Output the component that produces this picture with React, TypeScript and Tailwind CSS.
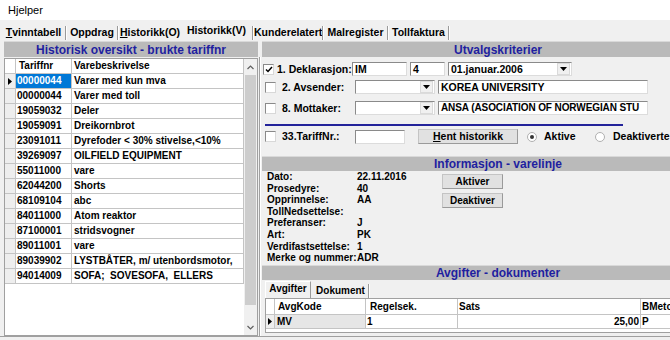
import React from "react";

const rows: [string, string][] = [
  ["00000044", "Varer med kun mva"],
  ["00000044", "Varer med toll"],
  ["19059032", "Deler"],
  ["19059091", "Dreikornbrot"],
  ["23091011", "Dyrefoder < 30% stivelse,<10%"],
  ["39269097", "OILFIELD EQUIPMENT"],
  ["55011000", "vare"],
  ["62044200", "Shorts"],
  ["68109104", "abc"],
  ["84011000", "Atom reaktor"],
  ["87100001", "stridsvogner"],
  ["89011001", "vare"],
  ["89039902", "LYSTBÅTER, m/ utenbordsmotor,"],
  ["94014009", "SOFA;  SOVESOFA,  ELLERS"],
];

function Arrow() {
  return (
    <svg width="4" height="7" viewBox="0 0 4 7">
      <path d="M0 0L4 3.5L0 7Z" fill="#000" />
    </svg>
  );
}

function Bar({ children, className = "" }: { children: React.ReactNode; className?: string }) {
  return (
    <div
      className={
        "shrink-0 bg-[#bababa] border-t border-[#d9d9d9] flex items-center justify-center text-[12px] font-bold text-[#1f1fa0] whitespace-nowrap " +
        className
      }
    >
      {children}
    </div>
  );
}

function Sep() {
  return <div className="w-[2px] h-[14px] shrink-0 border-l border-[#9a9a9a] border-r border-r-white" />;
}

function Tabs() {
  return (
    <div className="h-[20px] shrink-0 flex items-center pt-[6px] pl-[2px] text-[10.5px] font-bold whitespace-nowrap">
      <div className="w-[63px] text-center">
        <span className="underline underline-offset-[1px]">T</span>vinntabell
      </div>
      <Sep />
      <div className="w-[50px] text-center">Oppdrag</div>
      <Sep />
      <div className="w-[62px] text-center">
        <span className="underline underline-offset-[1px]">H</span>istorikk(O)
      </div>
      <div className="w-[71px] text-center mb-[4px]">Historikk(V)</div>
      <Sep />
      <div className="w-[68px] text-center">Kunderelatert</div>
      <Sep />
      <div className="w-[63px] text-center">Malregister</div>
      <Sep />
      <div className="w-[59px] text-center">Tollfaktura</div>
      <Sep />
    </div>
  );
}

function Chevron({ up }: { up?: boolean }) {
  return (
    <svg width="7" height="5" viewBox="0 0 7 5">
      <path d={up ? "M0.5 4L3.5 1L6.5 4" : "M0.5 1L3.5 4L6.5 1"} stroke="#606060" strokeWidth="1.2" fill="none" />
    </svg>
  );
}

function Left() {
  return (
    <div className="ml-[4px] w-[254px] shrink-0 flex flex-col">
      <Bar className="mt-[1px] h-[16px]">Historisk oversikt - brukte tariffnr</Bar>
      <div className="mt-[1px] h-[278px] border border-[#a0a0a0] bg-white flex">
        <div className="w-[239px] flex flex-col text-[10px] font-bold leading-none">
          <div className="flex h-[15px] border-b border-[#c4c4c4]">
            <div className="w-[11px] border-r border-[#c4c4c4]" />
            <div className="w-[56px] border-r border-[#c4c4c4] pl-[3px] flex items-center">Tariffnr</div>
            <div className="flex-1 border-r border-[#c4c4c4] pl-[2px] flex items-center">Varebeskrivelse</div>
          </div>
          {rows.map(([a, b], i) => (
            <div key={i} className="flex h-[15px] border-b border-[#c4c4c4]">
              <div className="w-[11px] bg-[#eeeeee] border-r border-[#c4c4c4] flex items-center justify-center">
                {i === 0 && <Arrow />}
              </div>
              <div
                className={
                  "w-[56px] border-r border-[#c4c4c4] pl-[1px] flex items-center " +
                  (i === 0 ? "bg-[#0078d7] text-white" : "")
                }
              >
                {a}
              </div>
              <div className="flex-1 border-r border-[#c4c4c4] pl-[2px] flex items-center whitespace-pre overflow-hidden">
                {b}
              </div>
            </div>
          ))}
        </div>
        <div className="w-[13px] flex flex-col bg-[#f0f0f0]">
          <div className="h-[16px] flex items-center justify-center">
            <Chevron up />
          </div>
          <div className="h-[230px] bg-[#cdcdcd] mx-[1px]" />
          <div className="flex-1" />
          <div className="h-[16px] flex items-center justify-center">
            <Chevron />
          </div>
        </div>
      </div>
    </div>
  );
}

function Check({ checked }: { checked?: boolean }) {
  return (
    <div className="w-[11px] h-[11px] shrink-0 bg-white border border-[#8a8a8a] border-r-[#d8d8d8] border-b-[#d8d8d8] flex items-center justify-center">
      {checked && (
        <svg width="8" height="7" viewBox="0 0 8 7">
          <path d="M1 3.5L3 5.5L7 1" stroke="#000" strokeWidth="1.5" fill="none" />
        </svg>
      )}
    </div>
  );
}

function Field({ children, className = "" }: { children?: React.ReactNode; className?: string }) {
  return (
    <div
      className={
        "shrink-0 bg-white border border-[#8a8a8a] border-r-[#dcdcdc] border-b-[#dcdcdc] flex items-center pl-[2px] overflow-hidden whitespace-nowrap " +
        className
      }
    >
      {children}
    </div>
  );
}

function Combo({ children, className = "" }: { children?: React.ReactNode; className?: string }) {
  return (
    <div
      className={
        "shrink-0 bg-white border border-[#8a8a8a] border-r-[#dcdcdc] border-b-[#dcdcdc] flex items-center overflow-hidden whitespace-nowrap " +
        className
      }
    >
      <div className="flex-1 pl-[2px]">{children}</div>
      <div className="w-[13px] h-[12px] mr-[1px] bg-[#f0f0f0] border border-[#dadada] flex items-center justify-center">
        <svg width="7" height="4" viewBox="0 0 7 4">
          <path d="M0 0H7L3.5 4Z" fill="#000" />
        </svg>
      </div>
    </div>
  );
}

function Btn({ children, className = "" }: { children: React.ReactNode; className?: string }) {
  return (
    <div
      className={
        "shrink-0 bg-[#e1e1e1] border border-[#c4c4c4] border-r-[#9a9a9a] border-b-[#9a9a9a] flex items-center justify-center whitespace-nowrap " +
        className
      }
    >
      {children}
    </div>
  );
}

function Radio({ checked }: { checked?: boolean }) {
  return (
    <div className="w-[10px] h-[10px] shrink-0 rounded-full bg-white border border-[#b0b0b0] flex items-center justify-center">
      {checked && <div className="w-[4px] h-[4px] rounded-full bg-[#333]" />}
    </div>
  );
}

function Right() {
  const labels = [
    ["Dato:", "22.11.2016"],
    ["Prosedyre:", "40"],
    ["Opprinnelse:", "AA"],
    ["TollNedsettelse:", ""],
    ["Preferanser:", "J"],
    ["Art:", "PK"],
    ["Verdifastsettelse:", "1"],
    ["Merke og nummer:", "ADR"],
  ];
  return (
    <div className="w-[472px] shrink-0 flex flex-col">
      <Bar className="mt-[1px] h-[16px]">Utvalgskriterier</Bar>
      <div className="h-[99px] shrink-0 flex flex-col text-[10.5px] font-bold leading-none">
        <div className="mt-[5px] h-[14px] flex items-center">
          <div className="w-[90px] flex items-center pl-[1px]">
            <Check checked />
            <span className="ml-[3px]">1. Deklarasjon:</span>
          </div>
          <Field className="w-[55px] h-full">IM</Field>
          <Field className="ml-[3px] w-[35px] h-full">4</Field>
          <Combo className="ml-[3px] w-[124px] h-full">01.januar.2006</Combo>
        </div>
        <div className="mt-[4px] h-[14px] flex items-center">
          <div className="w-[93px] flex items-center pl-[3px]">
            <Check />
            <span className="ml-[6px]">2. Avsender:</span>
          </div>
          <Combo className="w-[80px] h-full" />
          <Field className="ml-[3px] w-[210px] h-full">KOREA UNIVERSITY</Field>
        </div>
        <div className="mt-[7px] h-[14px] flex items-center">
          <div className="w-[93px] flex items-center pl-[3px]">
            <Check />
            <span className="ml-[6px]">8. Mottaker:</span>
          </div>
          <Combo className="w-[80px] h-full" />
          <Field className="ml-[3px] w-[210px] h-full text-[10px] tracking-[-0.1px]">
            ANSA (ASOCIATION OF NORWEGIAN STU
          </Field>
        </div>
        <div className="mt-[9px] ml-[3px] w-[358px] h-[2px] bg-[#23239a]" />
        <div className="mt-[3px] h-[15px] flex items-center">
          <div className="w-[93px] flex items-center pl-[3px]">
            <Check />
            <span className="ml-[6px]">33.TariffNr.:</span>
          </div>
          <Field className="w-[50px] h-[14px]" />
          <Btn className="ml-[13px] w-[100px] h-[15px]">
            <span>
              <span className="underline underline-offset-[1px]">H</span>ent historikk
            </span>
          </Btn>
          <div className="ml-[9px] w-[68px] flex items-center">
            <Radio checked />
            <span className="ml-[7px]">Aktive</span>
          </div>
          <div className="flex items-center">
            <Radio />
            <span className="ml-[8px]">Deaktiverte</span>
          </div>
        </div>
      </div>
      <Bar className="h-[15px]">Informasjon - varelinje</Bar>
      <div className="h-[94px] shrink-0 flex text-[10px] font-bold">
        <div className="w-[95px] pl-[5px] leading-[11.6px] whitespace-nowrap">
          {labels.map(([l]) => (
            <div key={l}>{l}</div>
          ))}
        </div>
        <div className="w-[85px] leading-[11.6px]">
          {labels.map(([l, v]) => (
            <div key={l} className="h-[11.6px]">
              {v}
            </div>
          ))}
        </div>
        <div className="flex flex-col pt-[3px]">
          <Btn className="w-[61px] h-[15px]">Aktiver</Btn>
          <Btn className="mt-[4px] w-[61px] h-[15px]">Deaktiver</Btn>
        </div>
      </div>
      <Bar className="h-[15px]">Avgifter - dokumenter</Bar>
      <div className="h-[18px] shrink-0 flex items-end pl-[3px] text-[10px] font-bold leading-none">
        <div className="w-[46px] h-[17px] border-t border-l border-white border-r border-r-[#9a9a9a] flex items-center justify-center pb-[3px]">
          Avgifter
        </div>
        <div className="ml-[2px] w-[55px] h-[15px] flex items-center justify-center">Dokument</div>
        <Sep />
      </div>
      <div className="ml-[3px] h-[35px] shrink-0 border border-[#a0a0a0] bg-white text-[10px] font-bold leading-none">
        <div className="flex h-[16px] border-b border-[#c4c4c4]">
          <div className="w-[9px] border-r border-[#c4c4c4]" />
          <div className="w-[91px] border-r border-[#c4c4c4] pl-[3px] flex items-center">AvgKode</div>
          <div className="w-[92px] border-r border-[#c4c4c4] pl-[4px] flex items-center">Regelsek.</div>
          <div className="w-[183px] border-r border-[#c4c4c4] pl-[1px] flex items-center">Sats</div>
          <div className="w-[80px] pl-[1px] flex items-center">BMetode</div>
        </div>
        <div className="flex h-[14px] border-b border-[#c4c4c4]">
          <div className="w-[9px] bg-[#eeeeee] border-r border-[#c4c4c4] flex items-center justify-center">
            <Arrow />
          </div>
          <div className="w-[91px] bg-[#e6e6e6] border-r border-[#c4c4c4] pl-[2px] flex items-center">MV</div>
          <div className="w-[92px] border-r border-[#c4c4c4] pl-[1px] flex items-center">1</div>
          <div className="w-[183px] border-r border-[#c4c4c4] pr-[1px] flex items-center justify-end">25,00</div>
          <div className="w-[80px] pl-[1px] flex items-center">P</div>
        </div>
      </div>
    </div>
  );
}

export default function App() {
  return (
    <div className="w-[670px] h-[340px] overflow-hidden bg-[#f0f0f0] font-['Liberation_Sans',Arial,sans-serif] text-black flex flex-col">
      <div className="h-[20px] shrink-0 bg-white flex items-center pl-[8px] text-[11px]">Hjelper</div>
      <Tabs />
      <div className="flex h-[296px] shrink-0">
        <Left />
        <div className="w-[4px] shrink-0 flex justify-center pt-[17px]">
          <div className="w-[1px] bg-[#a0a0a0]" />
          <div className="w-[1px] bg-white" />
        </div>
        <Right />
      </div>
      <div className="flex-1 border-t border-[#a0a0a0]" />
    </div>
  );
}
